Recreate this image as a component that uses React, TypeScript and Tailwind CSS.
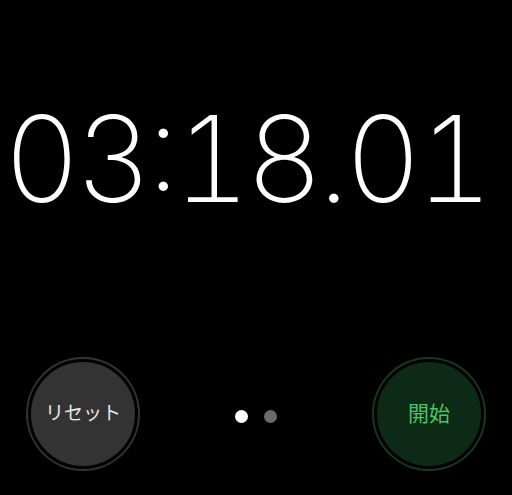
export default function App() {
  return (
    <div className="flex h-[495px] w-[512px] flex-col overflow-hidden bg-black font-['Inter','Noto_Sans_CJK_JP',sans-serif]">
      <div className="flex h-[318px] items-center justify-center pr-[20px]">
        <span className="whitespace-nowrap text-[119px] leading-none tracking-[-5px] text-white [font-weight:150] [font-feature-settings:'case','tnum']">
          03:18.01
        </span>
      </div>
      <div className="flex items-center justify-between px-[26px] pt-[39px]">
        <button className="flex h-[114px] w-[114px] items-center justify-center rounded-full bg-[#333333] p-[2px]">
          <span className="flex h-full w-full items-center justify-center rounded-full border-[3px] border-black bg-[#333333] text-[19px] text-[#e6e6e6]">
            リセット
          </span>
        </button>
        <div className="flex items-center gap-[16px] pt-[4px]">
          <span className="h-[13px] w-[13px] rounded-full bg-white" />
          <span className="h-[13px] w-[13px] rounded-full bg-[#6b6b6b]" />
        </div>
        <button className="flex h-[114px] w-[114px] items-center justify-center rounded-full bg-[#163a20] p-[2px]">
          <span className="flex h-full w-full items-center justify-center rounded-full border-[3px] border-black bg-[#0c2a15] text-[21px] text-[#4cc266]">
            開始
          </span>
        </button>
      </div>
    </div>
  );
}
